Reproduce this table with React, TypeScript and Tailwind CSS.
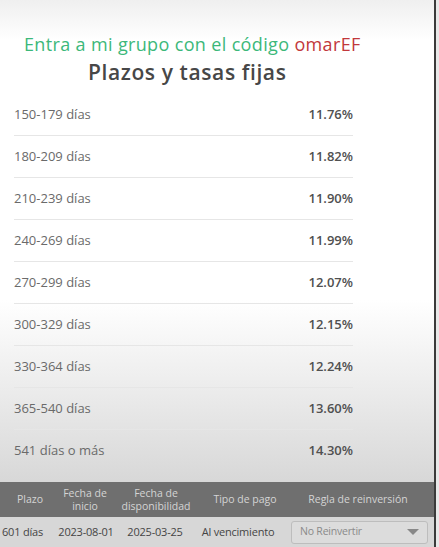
const rates = [
  { term: "150-179 días", rate: "11.76%" },
  { term: "180-209 días", rate: "11.82%" },
  { term: "210-239 días", rate: "11.90%" },
  { term: "240-269 días", rate: "11.99%" },
  { term: "270-299 días", rate: "12.07%" },
  { term: "300-329 días", rate: "12.15%" },
  { term: "330-364 días", rate: "12.24%" },
  { term: "365-540 días", rate: "13.60%" },
  { term: "541 días o más", rate: "14.30%" },
];

export default function App() {
  return (
    <div className="flex w-[439px] h-[547px] overflow-hidden bg-[#f2f2f2] font-['Open_Sans',sans-serif]">
      <div className="flex flex-col w-[436px] shrink-0 border-r-2 border-[#3a3a3a] bg-[linear-gradient(to_bottom,#efefef_0px,#ffffff_40px,#ffffff_300px,#d8d8d8_480px)]">
        <p className="mt-[33px] pl-[24px] text-[18px] leading-[23px] tracking-[0.35px] text-[#3cb87a] whitespace-nowrap">
          Entra a mi grupo con el código <span className="text-[#c2383c]">omarEF</span>
        </p>
        <h1 className="mt-[3px] pl-[88px] text-[21px] leading-[27px] tracking-[0.6px] font-semibold text-[#474747]">
          Plazos y tasas fijas
        </h1>

        <div className="mt-[8px] px-[14px] w-[367px]">
          {rates.map((r, i) => (
            <div
              key={r.term}
              className={`flex items-center justify-between h-[42px] text-[13px] ${
                i < rates.length - 1 ? "border-b border-[#e6e6e6]" : ""
              }`}
            >
              <span className="text-[#6a6a6a]">{r.term}</span>
              <span className="font-semibold text-[#505050]">{r.rate}</span>
            </div>
          ))}
        </div>

        <div className="mt-auto">
          <div className="flex items-center h-[35px] bg-[#6f6f6f] text-[10.5px] leading-[13px] text-[#d4d4d4] text-center whitespace-nowrap">
            <span className="w-[60px]">Plazo</span>
            <span className="w-[50px]">Fecha de<br />inicio</span>
            <span className="w-[92px]">Fecha de<br />disponibilidad</span>
            <span className="w-[86px]">Tipo de pago</span>
            <span className="flex-1 pr-[6px]">Regla de reinversión</span>
          </div>
          <div className="flex items-center h-[30px] bg-[#d7d7d7] text-[11px] tracking-[-0.2px] text-[#454545] whitespace-nowrap">
            <span className="w-[48px] pl-[2px]">601 días</span>
            <span className="w-[76px] text-center">2023-08-01</span>
            <span className="w-[62px] text-center">2025-03-25</span>
            <span className="w-[104px] text-center">Al vencimiento</span>
            <div className="flex items-center justify-between w-[137px] h-[23px] ml-[1px] px-[8px] rounded-[3px] border border-[#bdbdbd] bg-[#dcdcdc] text-[10.5px] text-[#8a8a8a]">
              <span>No Reinvertir</span>
              <span className="w-0 h-0 border-l-[6px] border-r-[6px] border-t-[6px] border-l-transparent border-r-transparent border-t-[#888]" />
            </div>
          </div>
        </div>
      </div>
      <div className="flex-1 bg-[#e8e8e8]" />
    </div>
  );
}
